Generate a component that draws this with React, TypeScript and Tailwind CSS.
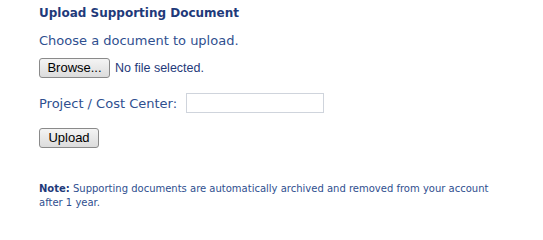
const App = () => {
  return (
    <div className="min-h-screen bg-white pl-[39px] pt-[5px] font-['DejaVu_Sans',Verdana,sans-serif] text-[#2f4f8f]">
      <h2 className="text-[12px] font-bold leading-[16px] text-[#1f3a7a]">
        Upload Supporting Document
      </h2>

      <p className="mt-[11px] text-[13px] leading-[17px]">
        Choose a document to upload.
      </p>

      {/* File picker */}
      <div className="mt-[9px] flex items-center gap-[5px] font-['Liberation_Sans',Arial,sans-serif]">
        <button className="h-[20px] w-[71px] rounded-[3px] border border-[#8a8a8a] bg-gradient-to-b from-[#f4f4f4] to-[#dcdcdc] text-[13px] leading-[18px] text-black">
          Browse...
        </button>
        <span className="text-[12.5px] text-[#1f3a7a]">No file selected.</span>
      </div>

      {/* Project field */}
      <div className="mt-[15px] flex items-center gap-[9px]">
        <label className="text-[13px] leading-[17px]">Project / Cost Center:</label>
        <input
          type="text"
          className="h-[20px] w-[138px] border border-[#cfd4dc] bg-white outline-none"
        />
      </div>

      <button className="mt-[15px] h-[20px] w-[60px] rounded-[3px] border border-[#8a8a8a] bg-gradient-to-b from-[#f4f4f4] to-[#dcdcdc] font-['Liberation_Sans',Arial,sans-serif] text-[13px] leading-[18px] text-black">
        Upload
      </button>

      <p className="mt-[33px] max-w-[470px] text-[10px] leading-[14px]">
        <span className="font-bold text-[#1f3a7a]">Note:</span> Supporting
        documents are automatically archived and removed from your account
        after 1 year.
      </p>
    </div>
  );
};

export default App;
